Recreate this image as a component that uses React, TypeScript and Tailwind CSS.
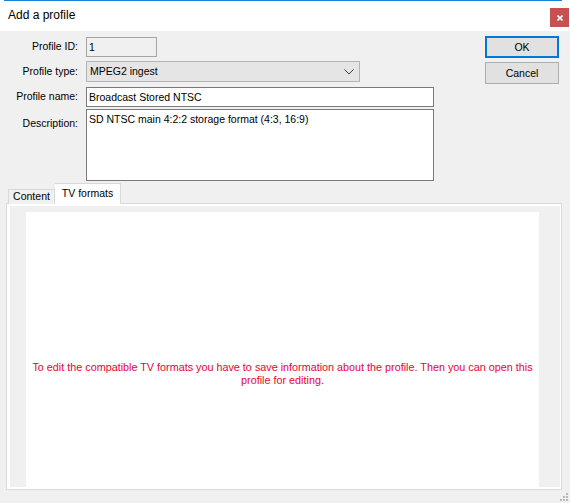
import React from 'react'

const FONT = '"Liberation Sans", Arial, sans-serif'

function Label({ children, top = false }: { children: React.ReactNode; top?: boolean }) {
  return (
    <div className={`w-[78px] shrink-0 text-right ${top ? 'pt-[7px]' : 'self-center'}`}>{children}</div>
  )
}

function Chevron() {
  return (
    <svg width="10" height="6" viewBox="0 0 10 6" className="block">
      <path d="M0.5 0.5 L5 5 L9.5 0.5" fill="none" stroke="#3c3c3c" strokeWidth="1" />
    </svg>
  )
}

function Grip() {
  const dots = [
    [6, 0],
    [3, 3],
    [6, 3],
    [0, 6],
    [3, 6],
    [6, 6],
  ]
  return (
    <svg width="8" height="8" viewBox="0 0 8 8" className="block">
      {dots.map(([x, y]) => (
        <rect key={`${x}-${y}`} x={x} y={y} width="2" height="2" fill="#b9b9b9" />
      ))}
    </svg>
  )
}

export default function App() {
  return (
    <div
      className="flex h-[503px] w-[570px] flex-col overflow-hidden bg-[#f0f0f0] text-[10.5px] text-black"
      style={{ fontFamily: FONT }}
    >
      {/* Title bar */}
      <div className="h-[31px] shrink-0 bg-white">
        <div className="ml-[4px] mr-[8px] h-px bg-[#1883d7]" />
        <div className="flex items-start justify-between">
          <span className="ml-[8px] mt-[6px] text-[12px] leading-[16px] text-black">Add a profile</span>
          <div className="mr-[1px] mt-[7px] flex h-[19px] w-[19px] items-center justify-center bg-[#c75050]">
            <svg width="6" height="6" viewBox="0 0 6 6" className="block">
              <path d="M0.5 0.5 L5.5 5.5 M5.5 0.5 L0.5 5.5" stroke="white" strokeWidth="1.6" />
            </svg>
          </div>
        </div>
      </div>

      {/* Form + buttons */}
      <div className="flex shrink-0">
        <div className="flex w-[434px] flex-col">
          <div className="mt-[6px] flex h-[20px] gap-[8px]">
            <Label>Profile ID:</Label>
            <div className="flex w-[71px] items-center border border-[#a5a5a5] bg-[#f0f0f0] pl-[2px] leading-none">
              1
            </div>
          </div>
          <div className="mt-[4px] flex h-[21px] gap-[8px]">
            <Label>Profile type:</Label>
            <div className="flex w-[274px] items-center justify-between border border-[#b4b4b4] bg-[#e5e5e5] pl-[3px] pr-[5px] leading-none">
              <span>MPEG2 ingest</span>
              <Chevron />
            </div>
          </div>
          <div className="mt-[5px] flex h-[20px] gap-[8px]">
            <Label>Profile name:</Label>
            <div className="flex flex-1 items-center border border-[#7a7a7a] bg-white pl-[2px] leading-none">
              Broadcast Stored NTSC
            </div>
          </div>
          <div className="mt-[2px] flex h-[72px] gap-[8px]">
            <Label top>Description:</Label>
            <div className="flex-1 border border-[#7a7a7a] bg-white pl-[2px] pt-[3px] leading-[13px]">
              SD NTSC main 4:2:2 storage format (4:3, 16:9)
            </div>
          </div>
        </div>

        <div className="ml-[51px] mt-[5px] flex flex-col gap-[4px]">
          <button className="flex h-[22px] w-[74px] items-center justify-center border-2 border-[#0078d7] bg-[#e1e1e1] leading-none">
            OK
          </button>
          <button className="flex h-[22px] w-[74px] items-center justify-center border border-[#adadad] bg-[#e1e1e1] leading-none">
            Cancel
          </button>
        </div>
      </div>

      {/* Tabs */}
      <div className="ml-[6px] mt-[2px] flex w-[556px] flex-1 flex-col">
        <div className="relative z-10 mb-[-1px] flex items-end pl-[2px]">
          <div className="flex h-[15px] w-[47px] items-center justify-center border border-b-0 border-[#d9d9d9] bg-[#f0f0f0] pb-px leading-none">
            Content
          </div>
          <div className="flex h-[21px] w-[66px] items-center justify-center border border-b-0 border-l-0 border-[#d9d9d9] bg-white pb-[2px] leading-none">
            TV formats
          </div>
        </div>
        <div className="flex h-[287px] flex-col border border-[#d9d9d9] bg-white pl-[3px] pr-px pt-[2px] pb-[2px]">
          <div className="flex flex-1 flex-col bg-[#f0f0f0] pl-[16px] pr-[21px] pt-[6px]">
            <div className="flex-1 bg-white px-[3px] pt-[149px] text-center text-[10.8px] leading-[13px] text-[#f20030]">
              To edit the compatible TV formats you have to save information about the profile. Then you can open this
              profile for editing.
            </div>
          </div>
        </div>
        <div className="flex flex-1 items-end justify-end pb-[2px]">
          <div className="mr-[-6px]">
            <Grip />
          </div>
        </div>
      </div>
    </div>
  )
}
